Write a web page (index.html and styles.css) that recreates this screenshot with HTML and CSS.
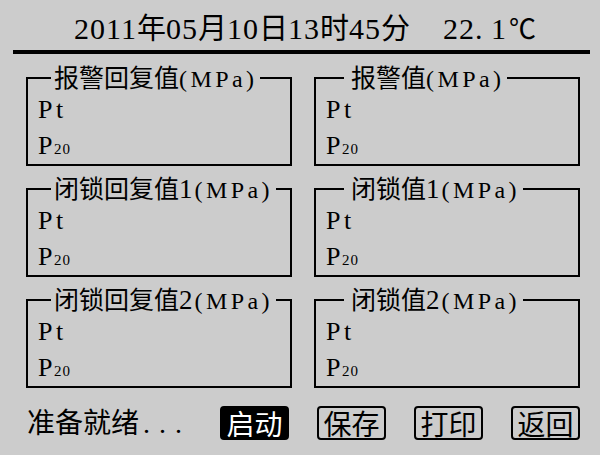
FILE: index.html
```html
<!DOCTYPE html>
<html lang="zh-CN">
<head>
<meta charset="utf-8">
<title>压力设定值</title>
<link rel="stylesheet" href="styles.css">
</head>
<body>
<div class="screen">
  <div class="header"><span class="n">2011</span>年<span class="n">05</span>月<span class="n">10</span>日<span class="n">13</span>时<span class="n">45</span>分<span class="n temp">22<span class="dot">.</span>1</span><span class="deg">℃</span></div>
  <div class="rule"></div>
  <div class="grid">
    <fieldset class="box left">
      <legend>报警回复值<span class="m">(MPa)</span></legend>
      <div class="body">
        <div class="row pt">Pt</div>
        <div class="row">P<span class="sub">20</span></div>
      </div>
    </fieldset>
    <fieldset class="box right">
      <legend>报警值<span class="m">(MPa)</span></legend>
      <div class="body">
        <div class="row pt">Pt</div>
        <div class="row">P<span class="sub">20</span></div>
      </div>
    </fieldset>
    <fieldset class="box left">
      <legend>闭锁回复值<span class="d">1</span><span class="m">(MPa)</span></legend>
      <div class="body">
        <div class="row pt">Pt</div>
        <div class="row">P<span class="sub">20</span></div>
      </div>
    </fieldset>
    <fieldset class="box right">
      <legend>闭锁值<span class="d">1</span><span class="m">(MPa)</span></legend>
      <div class="body">
        <div class="row pt">Pt</div>
        <div class="row">P<span class="sub">20</span></div>
      </div>
    </fieldset>
    <fieldset class="box left">
      <legend>闭锁回复值<span class="d">2</span><span class="m">(MPa)</span></legend>
      <div class="body">
        <div class="row pt">Pt</div>
        <div class="row">P<span class="sub">20</span></div>
      </div>
    </fieldset>
    <fieldset class="box right">
      <legend>闭锁值<span class="d">2</span><span class="m">(MPa)</span></legend>
      <div class="body">
        <div class="row pt">Pt</div>
        <div class="row">P<span class="sub">20</span></div>
      </div>
    </fieldset>
  </div>
  <div class="footer">
    <div class="status">准备就绪<span class="dots">...</span></div>
    <div class="actions">
      <button class="btn primary" type="button">启动</button>
      <button class="btn" type="button">保存</button>
      <button class="btn" type="button">打印</button>
      <button class="btn" type="button">返回</button>
    </div>
  </div>
</div>
</body>
</html>
```

FILE: styles.css
```css
html, body {
  margin: 0;
  padding: 0;
}

body {
  background: #cccccc;
  color: #000;
  font-family: "Noto Sans CJK SC", sans-serif;
}

.screen {
  width: 600px;
  height: 455px;
  overflow: hidden;
}

.header {
  height: 50px;
  box-sizing: border-box;
  padding: 11px 0 0 74px;
  font-size: 29px;
  line-height: 30px;
  white-space: nowrap;
}

.n {
  font-family: "Liberation Serif", serif;
  font-size: 30px;
  letter-spacing: 1px;
}

.dot {
  letter-spacing: 8.5px;
}

.temp {
  margin-left: 33px;
}

.deg {
  font-size: 27px;
  margin-left: 2px;
}

.rule {
  height: 4px;
  background: #000;
  margin: 0 10px 0 13px;
}

.grid {
  display: grid;
  grid-template-columns: 266px 266px;
  column-gap: 22px;
  row-gap: 8px;
  padding-left: 26px;
  margin-top: 9px;
}

.box {
  margin: 0;
  padding: 0;
  border: 2px solid #000;
  height: 103px;
  box-sizing: border-box;
  min-width: 0;
}

.box legend {
  font-size: 25px;
  line-height: 26px;
  padding: 0 3px;
  margin-left: 23px;
  white-space: nowrap;
}

.box.right legend {
  margin-left: 28px;
  padding-left: 7px;
}

.d {
  font-family: "Liberation Serif", serif;
  font-size: 27px;
  letter-spacing: 2px;
}

.m {
  font-family: "Liberation Serif", serif;
  font-size: 24px;
  letter-spacing: 3.4px;
}

.body {
  padding: 0 0 0 10px;
}

.row {
  height: 36px;
  line-height: 36px;
  font-family: "Liberation Serif", serif;
  font-size: 26px;
  letter-spacing: 1.5px;
  white-space: nowrap;
}

.row.pt {
  letter-spacing: 3.5px;
}

.sub {
  font-size: 15px;
  letter-spacing: 1px;
}

.footer {
  display: flex;
  align-items: center;
  margin-top: 16px;
  padding: 0 20px 0 27px;
}

.status {
  flex: 1;
  font-size: 28px;
  line-height: 34px;
  white-space: nowrap;
}

.dots {
  font-family: "Liberation Serif", serif;
  font-size: 28px;
  letter-spacing: 9px;
  margin-left: 4px;
}

.actions {
  display: flex;
  gap: 28px;
}

.btn {
  width: 69px;
  height: 34px;
  box-sizing: border-box;
  border: 2px solid #000;
  border-radius: 4px;
  padding: 0;
  margin: 0;
  background: transparent;
  color: #000;
  font-family: inherit;
  font-size: 28px;
  line-height: 30px;
  text-align: center;
}

.btn.primary {
  background: #000;
  color: #fff;
}
```
